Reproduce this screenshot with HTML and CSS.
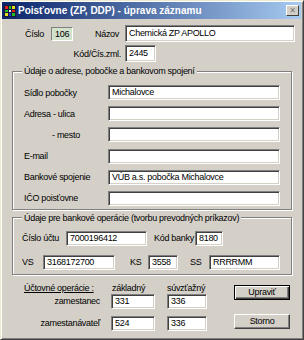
FILE: index.html
```html
<!DOCTYPE html>
<html lang="sk">
<head>
<meta charset="utf-8">
<link rel="stylesheet" href="styles.css">
</head>
<body>
<div class="window">
  <div class="titlebar">
    <svg class="appicon" width="12" height="12" viewBox="0 0 12 12">
      <rect x="0" y="0" width="12" height="12" fill="#1a1a40"/>
      <rect x="1" y="1" width="3" height="3" fill="#e02020"/>
      <rect x="5" y="1" width="2" height="3" fill="#20c020"/>
      <rect x="8" y="1" width="3" height="3" fill="#e0e020"/>
      <rect x="1" y="5" width="3" height="2" fill="#20c020"/>
      <rect x="5" y="5" width="2" height="2" fill="#f0f0f0"/>
      <rect x="8" y="5" width="3" height="2" fill="#e02020"/>
      <rect x="1" y="8" width="3" height="3" fill="#e0e020"/>
      <rect x="5" y="8" width="2" height="3" fill="#2040e0"/>
      <rect x="8" y="8" width="3" height="3" fill="#20c020"/>
    </svg>
    <span class="title">Poisťovne (ZP, DDP) - úprava záznamu</span>
    <span class="close">✕</span>
  </div>

  <div class="row row1">
    <span class="l-cislo">Číslo</span>
    <span class="idbox">106</span>
    <span class="l-nazov">Názov</span>
    <span class="field f-nazov">Chemická ZP APOLLO</span>
  </div>
  <div class="row row2">
    <span class="l-kod">Kód/Čís.zml.</span>
    <span class="field f-kod">2445</span>
  </div>

  <fieldset class="group g1">
    <legend>Údaje o adrese, pobočke a bankovom spojení</legend>
    <div class="frow first"><span class="flabel">Sídlo pobočky</span><span class="field fwide">Michalovce</span></div>
    <div class="frow"><span class="flabel">Adresa - ulica</span><span class="field fwide"></span></div>
    <div class="frow"><span class="flabel indent">- mesto</span><span class="field fwide"></span></div>
    <div class="frow"><span class="flabel">E-mail</span><span class="field fwide"></span></div>
    <div class="frow"><span class="flabel">Bankové spojenie</span><span class="field fwide">VÚB a.s. pobočka Michalovce</span></div>
    <div class="frow"><span class="flabel">IČO poisťovne</span><span class="field fwide"></span></div>
  </fieldset>

  <fieldset class="group g2">
    <legend>Údaje pre bankové operácie (tvorbu prevodných príkazov)</legend>
    <div class="brow brow1">
      <span class="l-ucet">Číslo účtu</span>
      <span class="field f-ucet">7000196412</span>
      <span class="l-banka">Kód banky</span>
      <span class="field f-banka">8180</span>
    </div>
    <div class="brow brow2">
      <span class="l-vs">VS</span>
      <span class="field f-vs">3168172700</span>
      <span class="l-ks">KS</span>
      <span class="field f-ks">3558</span>
      <span class="l-ss">SS</span>
      <span class="field f-ss">RRRRMM</span>
    </div>
  </fieldset>

  <div class="bottom">
    <div class="ops">
      <span class="ops-head">Účtovné operácie :</span>
      <span class="col-head h1">základný</span>
      <span class="col-head h2">súvzťažný</span>
      <span class="ops-label">zamestanec</span>
      <span class="field f-z1">331</span>
      <span class="field f-s1">336</span>
      <span class="ops-label">zamestanávateľ</span>
      <span class="field f-z2">524</span>
      <span class="field f-s2">336</span>
    </div>
    <div class="buttons">
      <span class="btn default">Upraviť</span>
      <span class="btn">Storno</span>
    </div>
  </div>
</div>
</body>
</html>
```

FILE: styles.css
```css
* { box-sizing: border-box; }
html, body { margin: 0; padding: 0; }
body {
  width: 304px;
  height: 340px;
  background: #D4D0C8;
  font-family: "Liberation Sans", Arial, sans-serif;
  font-size: 9px;
  letter-spacing: -0.3px;
  color: #000;
  overflow: hidden;
}
.window {
  width: 304px;
  height: 340px;
  border: 1px solid;
  border-color: #ECEAD0 #404040 #404040 #ECEAD0;
  box-shadow: inset 1px 1px #fff, inset -1px -1px #808080;
  padding: 1px 2px 2px 1px;
  background: #D4D0C8;
}
.titlebar {
  display: flex;
  align-items: center;
  height: 17px;
  padding-left: 2px;
  background: linear-gradient(to right, #0A246A, #A6CAF0);
}
.appicon { flex: none; margin-right: 2px; }
.title {
  flex: 1;
  color: #fff;
  font-weight: bold;
  font-size: 10px;
  letter-spacing: 0;
  white-space: nowrap;
}
.close {
  width: 13px;
  height: 11px;
  margin-right: 2px;
  background: #D4D0C8;
  border: 1px solid;
  border-color: #fff #404040 #404040 #fff;
  font-family: "DejaVu Sans", sans-serif;
  font-size: 8px;
  letter-spacing: 0;
  line-height: 9px;
  text-align: center;
  color: #777;
}

.field {
  display: block;
  flex: none;
  background: #fff;
  border: 1px solid;
  border-color: #808080 #fff #fff #808080;
  box-shadow: inset 1px 1px #404040, inset -1px -1px #D4D0C8;
  padding: 0 3px;
  white-space: nowrap;
  overflow: hidden;
}

.row { display: flex; align-items: center; height: 17px; }
.row1 { margin-top: 6px; }
.row2 { margin-top: 3px; }
.row .field { height: 17px; line-height: 15px; }
.l-cislo { margin-left: 23px; width: 26px; }
.idbox {
  width: 22px;
  height: 14px;
  line-height: 12px;
  padding-left: 3px;
  background: #D2E2CC;
  border: 1px solid;
  border-color: #808080 #fff #fff #808080;
}
.l-nazov { margin-left: 22px; width: 30px; }
.row .f-nazov { width: 170px; }
.l-kod { width: 123px; text-align: right; padding-right: 4px; }
.row .f-kod { width: 31px; }

.group {
  margin: 3px 0 0 10px;
  width: 280px;
  min-width: 0;
  border: 1px solid #808080;
  box-shadow: inset 1px 1px #fff, 1px 1px #fff;
  padding: 0 0 3px 9px;
}
.group legend {
  padding: 0 2px;
  line-height: 12px;
  background: #D4D0C8;
  white-space: nowrap;
}
.frow { display: flex; align-items: center; height: 15px; margin-top: 6.2px; }
.frow.first { margin-top: 8px; }
.flabel { width: 86px; white-space: nowrap; padding-left: 2px; }
.flabel.indent { padding-left: 30px; }
.frow .field { height: 15px; line-height: 13px; }
.fwide { width: 172px; }

.g2 { margin-top: 2px; padding-bottom: 4px; }
.brow { display: flex; align-items: center; height: 15px; }
.brow .field { height: 15px; line-height: 13px; }
.brow1 { margin-top: 7px; }
.brow2 { margin-top: 9px; }
.l-ucet { width: 44px; white-space: nowrap; }
.f-ucet { width: 81px; }
.l-banka { margin-left: 7px; width: 41px; white-space: nowrap; }
.f-banka { width: 28px; }
.l-vs { width: 21px; }
.f-vs { width: 72px; }
.l-ks { margin-left: 15px; width: 18px; }
.f-ks { width: 30px; }
.l-ss { margin-left: 12px; width: 19px; }
.f-ss { width: 71px; }

.bottom { display: flex; margin-top: 8px; }
.ops {
  display: grid;
  grid-template-columns: 109px 56px 40px;
  grid-template-rows: 11px 22px 15px;
  align-items: start;
}
.ops-head {
  padding-left: 22px;
  text-decoration: underline;
  white-space: nowrap;
  line-height: 11px;
}
.col-head { line-height: 11px; white-space: nowrap; }
.h1 { padding-left: 1px; }
.ops-label { text-align: right; padding-right: 11px; line-height: 15px; white-space: nowrap; }
.ops .field { height: 15px; line-height: 13px; }
.f-z1, .f-z2 { width: 44px; }
.f-s1, .f-s2 { width: 40px; }

.buttons {
  margin-left: 27px;
  padding-top: 2px;
  display: flex;
  flex-direction: column;
  gap: 14px;
}
.btn {
  display: block;
  width: 56px;
  height: 15px;
  line-height: 12px;
  text-align: center;
  border: 1px solid;
  border-color: #fff #404040 #404040 #fff;
  box-shadow: inset -1px -1px #808080;
}
.btn.default {
  border-color: #000;
  box-shadow: inset 1px 1px #fff, inset -1px -1px #404040, inset -2px -2px #808080;
}
```
